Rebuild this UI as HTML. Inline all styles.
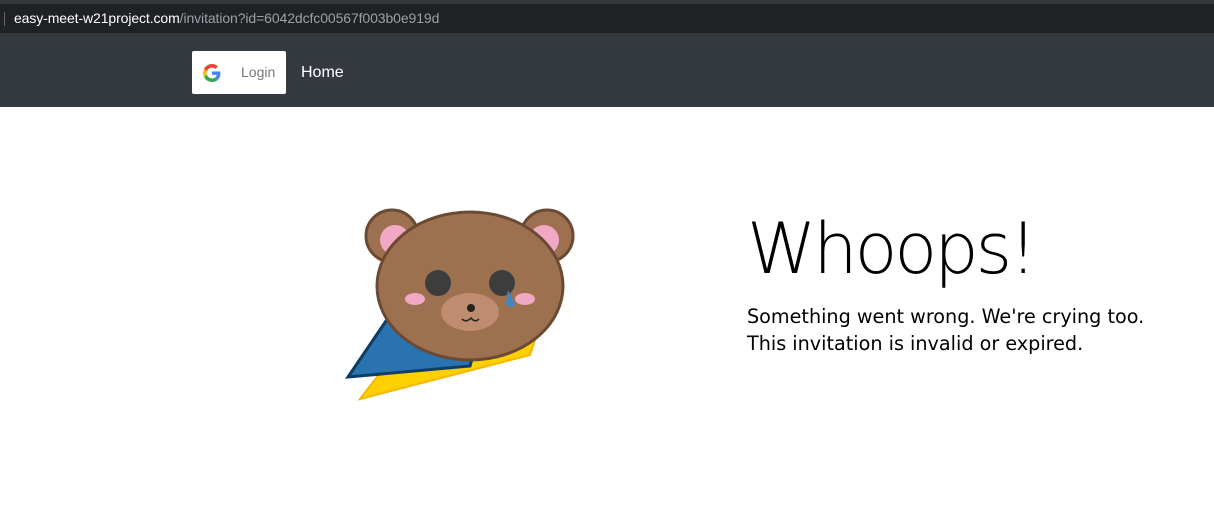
<!DOCTYPE html>
<html><head><style>
*{margin:0;padding:0;box-sizing:border-box}
body{width:1214px;height:507px;background:#fff;position:relative;overflow:hidden;font-family:"DejaVu Sans",sans-serif}
.chrome{position:absolute;left:0;top:0;width:1214px;height:37px;background:#35363a}
.addr{position:absolute;left:0;top:4px;width:1214px;height:29px;background:#202124}
.addr span{position:absolute;left:14px;top:6px;font:14px "Liberation Sans",sans-serif;color:#fff;letter-spacing:-0.1px}
.addr span i{font-style:normal;color:#9aa0a6}
.addr b{position:absolute;left:4px;top:8px;width:1px;height:14px;background:#666}
nav{position:absolute;left:0;top:37px;width:1214px;height:70px;background:#343a40}
.login{position:absolute;left:192px;top:14px;width:94px;height:43px;background:#fff;border-radius:2px}
.login span{position:absolute;left:49px;top:13px;font:14px "Liberation Sans",sans-serif;color:#777}
.home{position:absolute;left:301px;top:27px;font:16px "Liberation Sans",sans-serif;color:#fff}
h1{position:absolute;left:747px;top:208px;font-family:"DejaVu Sans",sans-serif;font-weight:200;font-size:70px;color:#000;letter-spacing:-3px}
p{position:absolute;left:747px;font-size:19.2px;color:#000;line-height:27px}
</style></head><body>
<div class="chrome"><div class="addr"><b></b><span>easy-meet-w21project.com<i>/invitation?id=6042dcfc00567f003b0e919d</i></span></div></div>
<nav>
<div class="login">
<svg style="position:absolute;left:11px;top:13px" width="18" height="18" viewBox="0 0 48 48">
<path fill="#EA4335" d="M24 9.5c3.5 0 6.6 1.2 9.1 3.6l6.8-6.8C35.8 2.4 30.3 0 24 0 14.6 0 6.6 5.4 2.7 13.2l7.9 6.2C12.5 13.6 17.8 9.5 24 9.5z"/>
<path fill="#4285F4" d="M46.5 24.5c0-1.6-.1-3.1-.4-4.5H24v9h12.6c-.5 2.9-2.200 5.4-4.700 7.1l7.7 6c4.5-4.2 6.9-10.3 6.9-17.6z"/>
<path fill="#FBBC05" d="M10.5 28.6c-.5-1.4-.8-3-.8-4.600s.3-3.200.8-4.600l-7.9-6.2C1 16.5 0 20.1 0 24s1 7.5 2.7 10.8l7.8-6.2z"/>
<path fill="#34A853" d="M24 48c6.5 0 11.9-2.100 15.9-5.800l-7.7-6c-2.2 1.5-5 2.3-8.2 2.3-6.2 0-11.5-4.2-13.4-9.9l-7.9 6.2C6.6 42.6 14.6 48 24 48z"/>
</svg><span>Login</span></div>
<div class="home">Home</div>
</nav>
<svg style="position:absolute;left:330px;top:200px" width="260" height="210" viewBox="0 0 260 210">
<polygon points="30,199 200,155 205,140 60,160" fill="#ffd000" stroke="#f5b800" stroke-width="2"/>
<polygon points="18,177 60,115 150,130 140,166" fill="#2873b0" stroke="#0f3d66" stroke-width="3"/>
<circle cx="62" cy="36" r="26" fill="#9d7150" stroke="#6b4a33" stroke-width="3"/>
<circle cx="217" cy="36" r="26" fill="#9d7150" stroke="#6b4a33" stroke-width="3"/>
<circle cx="65" cy="40" r="15" fill="#f0a8c4"/>
<circle cx="214" cy="40" r="15" fill="#f0a8c4"/>
<ellipse cx="140" cy="86" rx="93" ry="74" fill="#9d7150" stroke="#6b4a33" stroke-width="3"/>
<circle cx="108" cy="83" r="13" fill="#3d3d3d"/>
<circle cx="172" cy="83" r="13" fill="#3d3d3d"/>
<path d="M178 90 L176 104 Q181 110 185 104 Z" fill="#3e87c4"/>
<ellipse cx="85" cy="99" rx="10" ry="6" fill="#f0a8c4"/>
<ellipse cx="195" cy="99" rx="10" ry="6" fill="#f0a8c4"/>
<ellipse cx="140" cy="112" rx="29" ry="19" fill="#c08c6f"/>
<circle cx="141" cy="108" r="4" fill="#222"/>
<path d="M132 119 Q136 123 141 118 Q145 123 149 119" fill="none" stroke="#222" stroke-width="1.5"/>
</svg>
<h1>Whoops!</h1>
<p style="top:303px">Something went wrong. We're crying too.</p>
<p style="top:330px">This invitation is invalid or expired.</p>
</body></html>
